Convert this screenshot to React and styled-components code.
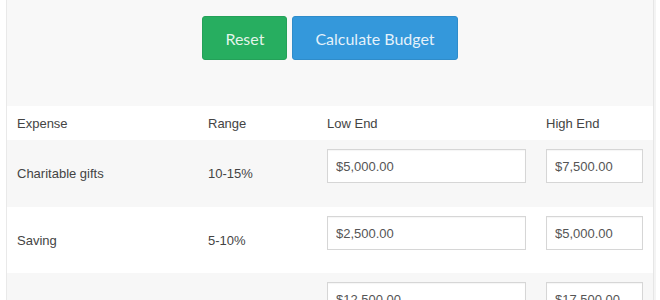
import React from "react";
import styled, { createGlobalStyle } from "styled-components";

const GlobalStyle = createGlobalStyle`
  html, body {
    margin: 0;
    padding: 0;
    background: #ffffff;
  }
  body {
    font-family: "Liberation Sans", Arial, sans-serif;
  }
`;

const Panel = styled.div`
  margin-left: 6px;
  width: 646px;
  height: 300px;
  background: #f8f8f8;
  border-left: 1px solid #e9e9e9;
  border-right: 1px solid #e6e6e6;
  box-shadow: 2px 0 0 #f4f4f4;
  overflow: hidden;
`;

const Toolbar = styled.div`
  display: flex;
  justify-content: center;
  gap: 5px;
  padding: 16px 0 0 0;
  height: 106px;
  box-sizing: border-box;
`;

const Button = styled.button`
  height: 44px;
  padding: 0 22px;
  border: 1px solid ${(p) => p.$border};
  border-radius: 3px;
  background: ${(p) => p.$bg};
  color: rgba(255, 255, 255, 0.88);
  font-family: Lato, "Open Sans", sans-serif;
  font-size: 16px;
  cursor: pointer;
`;

const Table = styled.table`
  width: 100%;
  border-collapse: collapse;
  table-layout: fixed;
  font-size: 13px;
  color: #444;
`;

const Head = styled.th`
  height: 34px;
  padding: 0 10px;
  box-sizing: border-box;
  text-align: left;
  font-weight: normal;
  background: #fff;
  width: ${(p) => (p.$w ? `${p.$w}px` : "auto")};
`;

const Row = styled.tr`
  background: ${(p) => (p.$striped ? "#f7f7f7" : "#fff")};
`;

const Cell = styled.td`
  height: ${(p) => p.$h || 66}px;
  padding: 0 10px;
  vertical-align: middle;
  box-sizing: border-box;
`;

const InputCell = styled(Cell)`
  vertical-align: top;
  padding-top: 9px;
`;

const Money = styled.input`
  display: block;
  width: 100%;
  height: 34px;
  box-sizing: border-box;
  padding: 0 8px;
  border: 1px solid #d6d6d6;
  border-radius: 0;
  background: #fff;
  font-family: "Liberation Sans", Arial, sans-serif;
  font-size: 13px;
  color: #555;
  box-shadow: inset 0 1px 1px rgba(0, 0, 0, 0.04);
`;

const rows = [
  { name: "Charitable gifts", range: "10-15%", low: "$5,000.00", high: "$7,500.00", h: 67 },
  { name: "Saving", range: "5-10%", low: "$2,500.00", high: "$5,000.00", h: 66 },
  { name: "", range: "", low: "$12,500.00", high: "$17,500.00", h: 66 },
];

export default function App() {
  return (
    <>
      <GlobalStyle />
      <Panel>
        <Toolbar>
          <Button $bg="#27ae60" $border="#24a159">Reset</Button>
          <Button $bg="#3498db" $border="#2f8cca">Calculate Budget</Button>
        </Toolbar>
        <Table>
          <thead>
            <tr>
              <Head $w={191}>Expense</Head>
              <Head $w={119}>Range</Head>
              <Head $w={219}>Low End</Head>
              <Head>High End</Head>
            </tr>
          </thead>
          <tbody>
            {rows.map((r, i) => (
              <Row key={i} $striped={i % 2 === 0}>
                <Cell $h={r.h}>{r.name}</Cell>
                <Cell $h={r.h}>{r.range}</Cell>
                <InputCell $h={r.h}>
                  <Money defaultValue={r.low} />
                </InputCell>
                <InputCell $h={r.h}>
                  <Money defaultValue={r.high} />
                </InputCell>
              </Row>
            ))}
          </tbody>
        </Table>
      </Panel>
    </>
  );
}
